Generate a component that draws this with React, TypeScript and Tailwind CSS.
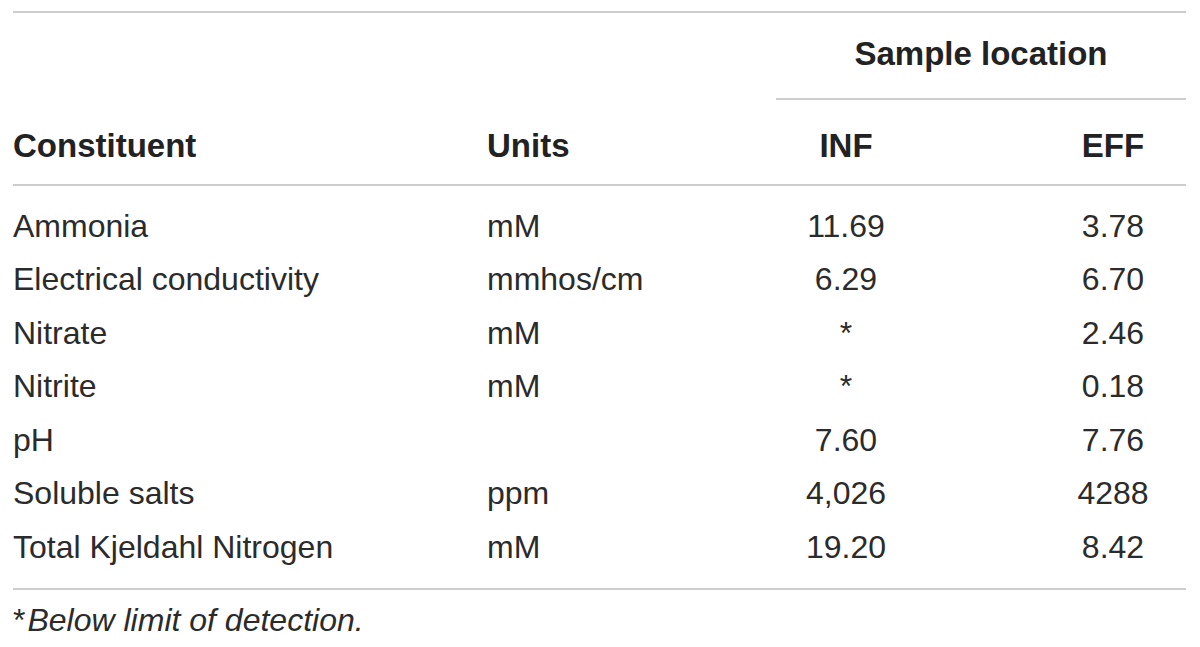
const rows: [string, string, string, string][] = [
  ["Ammonia", "mM", "11.69", "3.78"],
  ["Electrical conductivity", "mmhos/cm", "6.29", "6.70"],
  ["Nitrate", "mM", "*", "2.46"],
  ["Nitrite", "mM", "*", "0.18"],
  ["pH", "", "7.60", "7.76"],
  ["Soluble salts", "ppm", "4,026", "4288"],
  ["Total Kjeldahl Nitrogen", "mM", "19.20", "8.42"],
];

const cols = "grid grid-cols-[474px_289px_140px_270px]";

export default function App() {
  return (
    <div
      className="min-h-screen bg-white text-[#222]"
      style={{ fontFamily: '"Liberation Sans", Arial, sans-serif' }}
    >
      <div className="ml-[13px] w-[1173px] pt-[11px]">
        <div className="border-t-2 border-[#cdcdcd]" />

        {/* header row 1 */}
        <div className={`${cols} h-[87px]`}>
          <div className="col-span-2" />
          <div className="col-span-2 flex items-center justify-center border-b-2 border-[#cdcdcd] pb-[4px] text-[33px] font-bold leading-none">
            Sample location
          </div>
        </div>

        {/* header row 2 */}
        <div
          className={`${cols} h-[86px] items-center border-b-2 border-[#cdcdcd] pt-[6px] text-[33px] font-bold leading-none`}
        >
          <div>Constituent</div>
          <div>Units</div>
          <div className="text-center">INF</div>
          <div className="pl-[124px] text-center">EFF</div>
        </div>

        {/* body */}
        <div className="border-b-2 border-[#cdcdcd] pb-[14px] pt-[13px] text-[32px] leading-none text-[#2b2b2b]">
          {rows.map(([name, unit, inf, eff]) => (
            <div key={name} className={`${cols} h-[53.5px] items-center`}>
              <div>{name}</div>
              <div>{unit}</div>
              <div className="text-center">{inf}</div>
              <div className="pl-[124px] text-center">{eff}</div>
            </div>
          ))}
        </div>

        {/* footnote */}
        <div className="pt-[14px] text-[32px] leading-none text-[#2b2b2b]">
          <span className="mr-[2px]">*</span>
          <span className="italic">Below limit of detection.</span>
        </div>
      </div>
    </div>
  );
}
